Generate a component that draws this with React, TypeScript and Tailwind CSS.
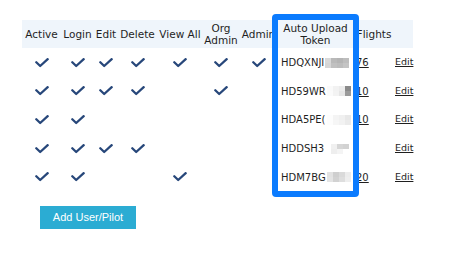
import type { ReactNode } from 'react'

const cols = 'grid grid-cols-[39px_33px_24px_39px_46px_36px_39px_75px_42px_18px]'

type Row = {
  perms: boolean[]
  token: string
  blur: string[]
  flights?: string
  h: string
}

const rows: Row[] = [
  {
    perms: [true, true, true, true, true, true, true],
    token: 'HDQXNJI',
    blur: ['#d9d9d9', '#b9b9b9', '#b4b4b4', '#bdbdbd', '#d6d6d6', '#c0c0c0', '#bcbcbc', '#c4c4c4'],
    flights: '76',
    h: 'h-[29px]',
  },
  {
    perms: [true, true, true, true, false, true, false],
    token: 'HD59WR',
    blur: ['#fafafa', '#f2f2f2', '#ececec', '#8a8a8a', '#fbfbfb', '#f3f3f3', '#e6e6e6', '#9a9a9a'],
    flights: '10',
    h: 'h-[28px]',
  },
  {
    perms: [true, true, false, false, false, false, false],
    token: 'HDA5PE(',
    blur: ['#fdfdfd', '#f4f4f4', '#f0f0f0', '#e8e8e8', '#fdfdfd', '#f6f6f6', '#f2f2f2', '#ebebeb'],
    flights: '10',
    h: 'h-[29px]',
  },
  {
    perms: [true, true, true, true, false, false, false],
    token: 'HDDSH3',
    blur: ['#ffffff', '#f0f0f0', '#d6d6d6', '#d2d2d2', '#ffffff', '#eeeeee', '#f4f4f4', '#ffffff'],
    h: 'h-[29px]',
  },
  {
    perms: [true, true, false, false, true, false, false],
    token: 'HDM7BG',
    blur: ['#e2e2e2', '#cfcfcf', '#dadada', '#ececec', '#e4e4e4', '#d2d2d2', '#dedede', '#eeeeee'],
    flights: '20',
    h: 'h-[28px]',
  },
]

function Check() {
  return (
    <svg width="14" height="10" viewBox="0 0 14 10" fill="none">
      <path
        d="M1.3 4.2 L5.2 8 L12.7 1.2"
        stroke="#27477a"
        strokeWidth="2.3"
        strokeLinecap="round"
        strokeLinejoin="round"
      />
    </svg>
  )
}

function Head({ children }: { children: ReactNode }) {
  return (
    <div className="flex items-center justify-center text-center leading-[12px]">
      {children}
    </div>
  )
}

function Blur({ cells }: { cells: string[] }) {
  return (
    <span className="ml-[1px] grid grid-cols-4 grid-rows-2 w-[24px] h-[10px]">
      {cells.map((c, i) => (
        <span key={i} style={{ backgroundColor: c }} />
      ))}
    </span>
  )
}

export default function App() {
  return (
    <div className="relative w-[451px] h-[254px] bg-white text-[#1f1f1f] font-['DejaVu_Sans',Verdana,sans-serif] text-[10.5px]">
      <div className="pt-[20px] pl-[22px]">
        <div className={`${cols} w-[391px] h-[28px] bg-[#eff5fb]`}>
          <Head>Active</Head>
          <Head>Login</Head>
          <Head>Edit</Head>
          <Head>Delete</Head>
          <Head>View All</Head>
          <Head>
            Org
            <br />
            Admin
          </Head>
          <Head>Admin</Head>
          <Head>
            Auto Upload
            <br />
            Token
          </Head>
          <Head>Flights</Head>
          <div />
        </div>

        {rows.map((r) => (
          <div key={r.token} className={`${cols} w-[391px] ${r.h}`}>
            {r.perms.map((p, i) => (
              <div key={i} className="flex items-center justify-center">
                {p && <Check />}
              </div>
            ))}
            <div className="flex items-center pl-[3px] text-[10px]">
              <span>{r.token}</span>
              <Blur cells={r.blur} />
            </div>
            <div className="flex items-center pl-[3px] text-[10px]">
              {r.flights && <span className="underline">{r.flights}</span>}
            </div>
            <div className="flex items-center text-[9.5px]">
              <span className="underline">Edit</span>
            </div>
          </div>
        ))}

        <button className="mt-[15px] ml-[18px] w-[96px] h-[23px] bg-[#2bacd3] text-white font-['Liberation_Sans',Arial,sans-serif] text-[11px]">
          Add User/Pilot
        </button>
      </div>

      <div className="absolute left-[272px] top-[14px] w-[87px] h-[183px] border-[6px] border-[#0b7bfe] rounded-[4px]" />
    </div>
  )
}
